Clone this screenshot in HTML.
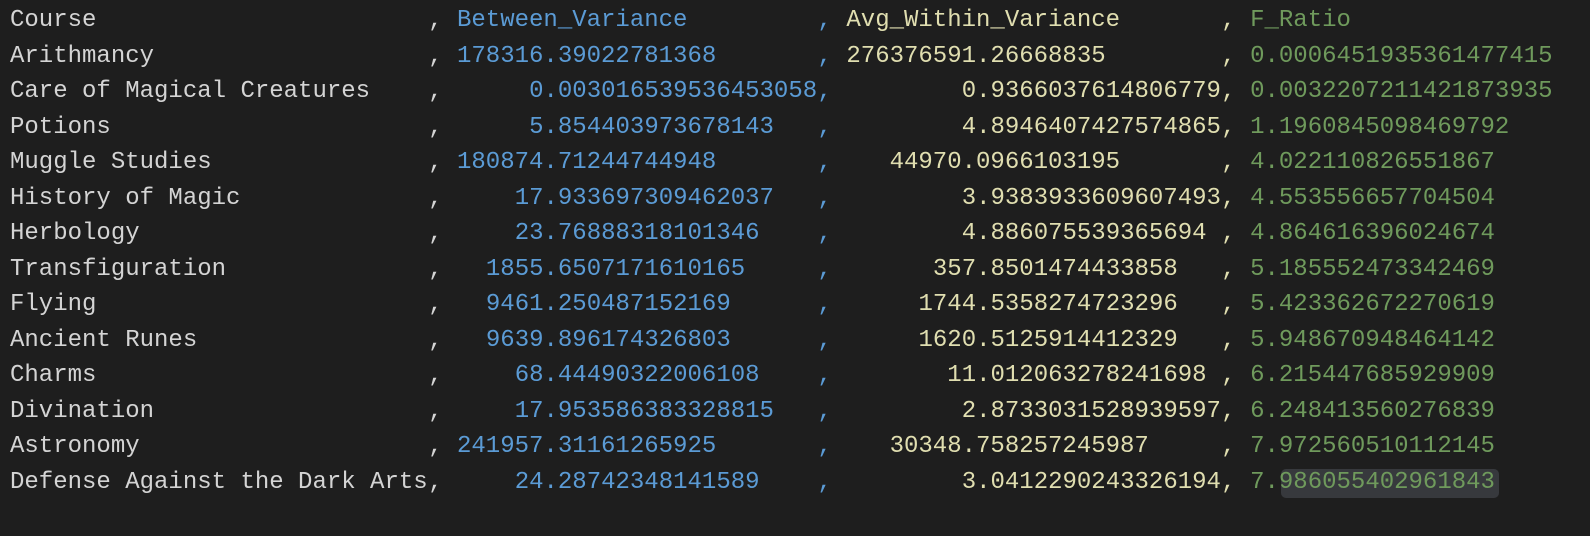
<!DOCTYPE html>
<html><head><style>
html,body{margin:0;padding:0;background:#1e1e1e;width:1590px;height:536px;overflow:hidden}
.r{position:absolute;left:0;height:35.5px;line-height:35.5px;font-family:"Liberation Mono",monospace;font-size:24px;white-space:pre;width:1590px}
.r span{position:absolute;top:0}
.w{color:#d4d4d4}.b{color:#5b9bd5}.y{color:#e0deb0}.g{color:#6f9a5c}
.hl{position:absolute;left:1281px;top:469px;width:218px;height:29px;background:#37393d;border-radius:5px}
</style></head><body>
<div class="hl"></div>
<div class="r" style="top:3px"><span class="w" style="left:10px">Course</span><span class="w" style="left:428.2px">,</span><span class="b" style="left:457px">Between_Variance</span><span class="b" style="left:817.5px">,</span><span class="y" style="left:846.4px">Avg_Within_Variance</span><span class="y" style="left:1221.3px">,</span><span class="g" style="left:1250.1px">F_Ratio</span></div>
<div class="r" style="top:38.5px"><span class="w" style="left:10px">Arithmancy</span><span class="w" style="left:428.2px">,</span><span class="b" style="left:457px">178316.39022781368</span><span class="b" style="left:817.5px">,</span><span class="y" style="left:846.4px">276376591.26668835</span><span class="y" style="left:1221.3px">,</span><span class="g" style="left:1250.1px">0.0006451935361477415</span></div>
<div class="r" style="top:74px"><span class="w" style="left:10px">Care of Magical Creatures</span><span class="w" style="left:428.2px">,</span><span class="b" style="left:529.1px">0.003016539536453058</span><span class="b" style="left:817.5px">,</span><span class="y" style="left:961.7px">0.9366037614806779</span><span class="y" style="left:1221.3px">,</span><span class="g" style="left:1250.1px">0.0032207211421873935</span></div>
<div class="r" style="top:109.5px"><span class="w" style="left:10px">Potions</span><span class="w" style="left:428.2px">,</span><span class="b" style="left:529.1px">5.854403973678143</span><span class="b" style="left:817.5px">,</span><span class="y" style="left:961.7px">4.8946407427574865</span><span class="y" style="left:1221.3px">,</span><span class="g" style="left:1250.1px">1.1960845098469792</span></div>
<div class="r" style="top:145px"><span class="w" style="left:10px">Muggle Studies</span><span class="w" style="left:428.2px">,</span><span class="b" style="left:457px">180874.71244744948</span><span class="b" style="left:817.5px">,</span><span class="y" style="left:889.6px">44970.0966103195</span><span class="y" style="left:1221.3px">,</span><span class="g" style="left:1250.1px">4.022110826551867</span></div>
<div class="r" style="top:180.5px"><span class="w" style="left:10px">History of Magic</span><span class="w" style="left:428.2px">,</span><span class="b" style="left:514.7px">17.933697309462037</span><span class="b" style="left:817.5px">,</span><span class="y" style="left:961.7px">3.9383933609607493</span><span class="y" style="left:1221.3px">,</span><span class="g" style="left:1250.1px">4.553556657704504</span></div>
<div class="r" style="top:216px"><span class="w" style="left:10px">Herbology</span><span class="w" style="left:428.2px">,</span><span class="b" style="left:514.7px">23.76888318101346</span><span class="b" style="left:817.5px">,</span><span class="y" style="left:961.7px">4.886075539365694</span><span class="y" style="left:1221.3px">,</span><span class="g" style="left:1250.1px">4.864616396024674</span></div>
<div class="r" style="top:251.5px"><span class="w" style="left:10px">Transfiguration</span><span class="w" style="left:428.2px">,</span><span class="b" style="left:485.9px">1855.6507171610165</span><span class="b" style="left:817.5px">,</span><span class="y" style="left:932.9px">357.8501474433858</span><span class="y" style="left:1221.3px">,</span><span class="g" style="left:1250.1px">5.185552473342469</span></div>
<div class="r" style="top:287px"><span class="w" style="left:10px">Flying</span><span class="w" style="left:428.2px">,</span><span class="b" style="left:485.9px">9461.250487152169</span><span class="b" style="left:817.5px">,</span><span class="y" style="left:918.5px">1744.5358274723296</span><span class="y" style="left:1221.3px">,</span><span class="g" style="left:1250.1px">5.423362672270619</span></div>
<div class="r" style="top:322.5px"><span class="w" style="left:10px">Ancient Runes</span><span class="w" style="left:428.2px">,</span><span class="b" style="left:485.9px">9639.896174326803</span><span class="b" style="left:817.5px">,</span><span class="y" style="left:918.5px">1620.5125914412329</span><span class="y" style="left:1221.3px">,</span><span class="g" style="left:1250.1px">5.948670948464142</span></div>
<div class="r" style="top:358px"><span class="w" style="left:10px">Charms</span><span class="w" style="left:428.2px">,</span><span class="b" style="left:514.7px">68.44490322006108</span><span class="b" style="left:817.5px">,</span><span class="y" style="left:947.3px">11.012063278241698</span><span class="y" style="left:1221.3px">,</span><span class="g" style="left:1250.1px">6.215447685929909</span></div>
<div class="r" style="top:393.5px"><span class="w" style="left:10px">Divination</span><span class="w" style="left:428.2px">,</span><span class="b" style="left:514.7px">17.953586383328815</span><span class="b" style="left:817.5px">,</span><span class="y" style="left:961.7px">2.8733031528939597</span><span class="y" style="left:1221.3px">,</span><span class="g" style="left:1250.1px">6.248413560276839</span></div>
<div class="r" style="top:429px"><span class="w" style="left:10px">Astronomy</span><span class="w" style="left:428.2px">,</span><span class="b" style="left:457px">241957.31161265925</span><span class="b" style="left:817.5px">,</span><span class="y" style="left:889.6px">30348.758257245987</span><span class="y" style="left:1221.3px">,</span><span class="g" style="left:1250.1px">7.972560510112145</span></div>
<div class="r" style="top:464.5px"><span class="w" style="left:10px">Defense Against the Dark Arts</span><span class="w" style="left:428.2px">,</span><span class="b" style="left:514.7px">24.28742348141589</span><span class="b" style="left:817.5px">,</span><span class="y" style="left:961.7px">3.0412290243326194</span><span class="y" style="left:1221.3px">,</span><span class="g" style="left:1250.1px">7.986055402961843</span></div>
</body></html>
